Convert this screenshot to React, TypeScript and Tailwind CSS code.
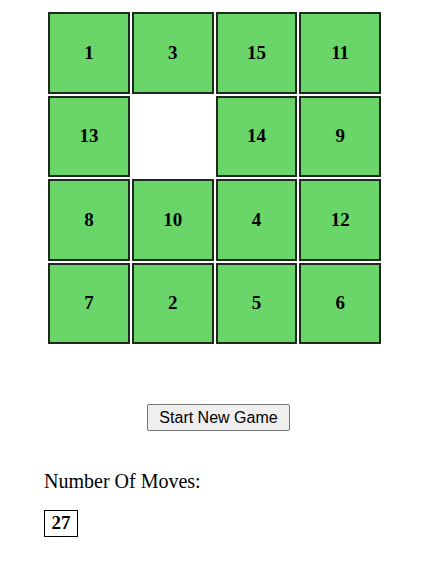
import React from 'react';

const tiles: (number | null)[] = [1, 3, 15, 11, 13, null, 14, 9, 8, 10, 4, 12, 7, 2, 5, 6];

export default function App() {
  return (
    <div className="min-h-[564px] bg-white font-['Liberation_Serif',serif] text-black">
      {/* Board */}
      <div className="ml-[48px] pt-[12px] grid grid-cols-4 gap-[2px] w-[333px]">
        {tiles.map((n, i) =>
          n === null ? (
            <div key={i} className="h-[81.5px]" />
          ) : (
            <div
              key={i}
              className="h-[81.5px] flex items-center justify-center border-[2px] border-[#1f2a1f] bg-[#6ad66a] text-[19px] font-bold"
            >
              {n}
            </div>
          )
        )}
      </div>

      <div className="mt-[60px] ml-[147px]">
        <button className="h-[27px] w-[143px] rounded-[2px] border border-[#767676] bg-[#efefef] font-['Liberation_Sans',sans-serif] text-[16px] text-black">
          Start New Game
        </button>
      </div>

      <div className="ml-[44px] mt-[39px] text-[20px] leading-[22px]">Number Of Moves:</div>
      <div className="ml-[44px] mt-[18px] inline-flex h-[27px] w-[34px] items-center justify-center border border-black text-[19px] font-bold">
        27
      </div>
    </div>
  );
}
